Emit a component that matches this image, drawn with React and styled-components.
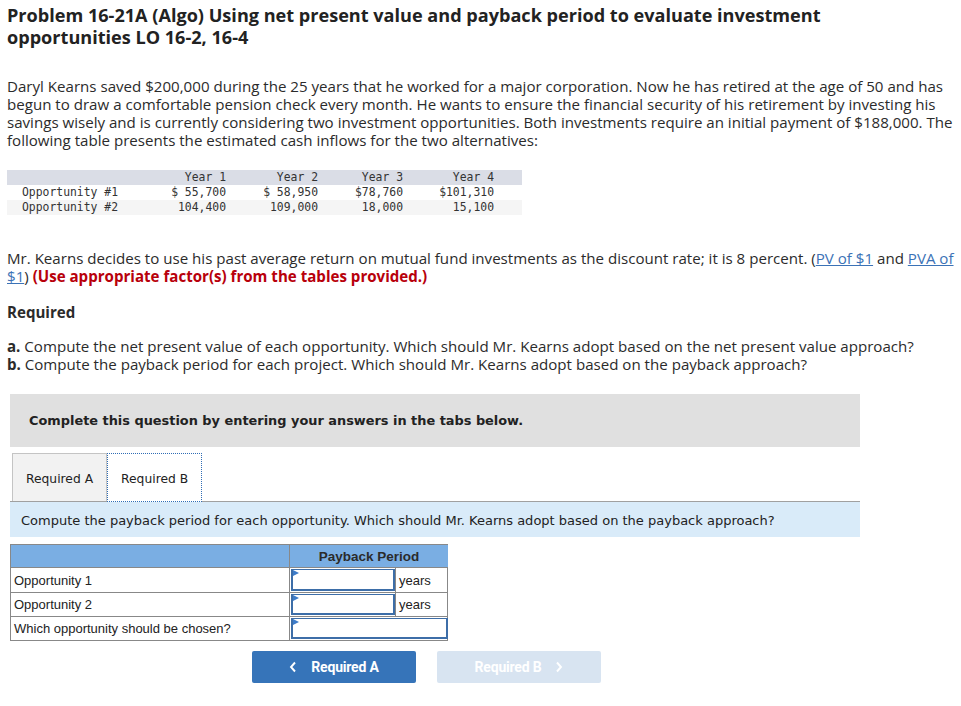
import React from "react";
import styled, { createGlobalStyle } from "styled-components";

const Global = createGlobalStyle`
  html, body { margin: 0; padding: 0; background: #fff; }
  body { font-family: "Open Sans", "Noto Sans", sans-serif; color: #2b2b2b; }
`;

const Page = styled.div`
  width: 961px;
  padding: 4px 0 0 7px;
  box-sizing: border-box;
`;

const Title = styled.h1`
  margin: 0;
  font-family: "Open Sans", sans-serif;
  font-weight: 700;
  font-size: 18.1px;
  line-height: 22px;
  color: #222;
  width: 880px;
`;

const Para = styled.p`
  margin: ${(p) => p.$mt || 0}px 0 0;
  font-family: "Open Sans", sans-serif;
  font-size: 15.1px;
  line-height: 18px;
  width: 948px;
  color: #2b2b2b;
`;

const Strong = styled.b`
  font-weight: 700;
  color: ${(p) => p.$color || "inherit"};
`;

const Link = styled.a`
  color: #3b72b6;
  text-decoration: underline;
`;

const DataTable = styled.div`
  margin-top: 21px;
  width: 515px;
  display: grid;
  grid-template-columns: 143px 76px 92px 85px 91px 28px;
  font-family: "DejaVu Sans Mono", "Liberation Mono", monospace;
  font-size: 11.4px;
  line-height: 15px;
  color: #333;
`;

const DCell = styled.div`
  background: ${(p) => p.$bg};
  text-align: ${(p) => (p.$left ? "left" : "right")};
  padding-left: ${(p) => (p.$left ? "15px" : "0")};
  white-space: pre;
`;

const Gray = styled.div`
  margin: 21px 0 0 3px;
  width: 850px;
  height: 53px;
  background: #e0e0e0;
  display: flex;
  align-items: center;
  padding-left: 19px;
  box-sizing: border-box;
  font-family: "DejaVu Sans", Verdana, sans-serif;
  font-weight: bold;
  font-size: 12.9px;
  color: #222;
`;

const Tabs = styled.div`
  margin: 6px 0 0 3px;
  width: 850px;
  display: flex;
  align-items: flex-end;
  border-bottom: 1px solid #a0a0a0;
  height: 49px;
  padding-left: 2px;
  box-sizing: border-box;
`;

const Tab = styled.div`
  box-sizing: border-box;
  padding: 2px 13px 0;
  display: flex;
  align-items: center;
  font-family: "DejaVu Sans", Verdana, sans-serif;
  font-size: 12.3px;
  color: #222;
  background: ${(p) => (p.$active ? "#fff" : "#f2f2f2")};
  border: ${(p) => (p.$active ? "1px dotted #2f6db5" : "1px solid #c4c4c4")};
  border-bottom: ${(p) => (p.$active ? "1px dotted #2f6db5" : "none")};
  outline: ${(p) => (p.$active ? "1px dotted #2f6db5" : "none")};
  outline-offset: -1px;
  margin-bottom: ${(p) => (p.$active ? "-1px" : "0")};
  height: ${(p) => (p.$active ? "49px" : "48px")};
`;

const Instr = styled.div`
  margin-left: 3px;
  width: 850px;
  height: 35px;
  background: #d9ebf9;
  display: flex;
  align-items: center;
  padding: 2px 0 0 11px;
  box-sizing: border-box;
  font-family: "DejaVu Sans", Verdana, sans-serif;
  font-size: 13px;
  color: #222;
`;

const Answer = styled.div`
  margin: 7px 0 0 3px;
  width: 438px;
  display: grid;
  grid-template-columns: 279px 1fr;
  border: 1px solid #888;
  box-sizing: border-box;
  font-family: "Liberation Sans", Arial, sans-serif;
  font-size: 13px;
  color: #222;
`;

const HeadCell = styled.div`
  height: 23px;
  background: #7aaee3;
  border-right: ${(p) => (p.$first ? "1px solid #888" : "none")};
  border-bottom: 1px solid #888;
  display: flex;
  align-items: center;
  justify-content: center;
  font-weight: bold;
  font-size: 13.5px;
  color: #2b2b2b;
  box-sizing: border-box;
`;

const LabelCell = styled.div`
  height: ${(p) => p.$h}px;
  border-right: 1px solid #888;
  border-bottom: ${(p) => (p.$last ? "none" : "1px solid #888")};
  display: flex;
  align-items: center;
  padding-left: 3px;
  box-sizing: border-box;
`;

const InputCell = styled.div`
  height: ${(p) => p.$h}px;
  border-bottom: ${(p) => (p.$last ? "none" : "1px solid #888")};
  display: flex;
  align-items: stretch;
  box-sizing: border-box;
`;

const InputBox = styled.div`
  position: relative;
  width: ${(p) => (p.$wide ? "157px" : "104px")};
  margin: 1px 0 1px 1px;
  border: 2px solid #3d6ea8;
  border-top-width: 1px;
  box-sizing: border-box;
  background: #fff;
  &::before {
    content: "";
    position: absolute;
    left: 0;
    top: 0;
    border-left: 6px solid #3d7cc9;
    border-top: 3px solid transparent;
    border-bottom: 3px solid transparent;
  }
`;

const Unit = styled.div`
  border-left: 1px solid #888;
  padding-left: 3px;
  display: flex;
  align-items: center;
  flex: 1;
`;

const Nav = styled.div`
  margin: 10px 0 0 245px;
  display: flex;
  gap: 21px;
`;

const NavBtn = styled.div`
  width: 164px;
  height: 32px;
  border-radius: 2px;
  background: ${(p) => (p.$disabled ? "#d8e4f1" : "#3674b9")};
  color: #fff;
  display: flex;
  align-items: center;
  justify-content: center;
  gap: 14px;
  font-family: "Roboto", "Liberation Sans", sans-serif;
  font-weight: bold;
  font-size: 14px;
  letter-spacing: -0.2px;
`;

const Chev = ({ dir }) => (
  <svg width="8" height="12" viewBox="0 0 8 12">
    <path
      d={dir === "left" ? "M6 1.5 L2 6 L6 10.5" : "M2 1.5 L6 6 L2 10.5"}
      fill="none"
      stroke="#fff"
      strokeWidth="1.9"
    />
  </svg>
);

const dataRows = [
  ["", "Year 1", "Year 2", "Year 3", "Year 4"],
  ["Opportunity #1", "$ 55,700", "$ 58,950", "$78,760", "$101,310"],
  ["Opportunity #2", "104,400", "109,000", "18,000", "15,100"],
];
const rowBg = ["#dadde6", "#ffffff", "#f5f5f5"];

export default function App() {
  return (
    <Page>
      <Global />
      <Title>
        Problem 16-21A (Algo) Using net present value and payback period to evaluate investment
        opportunities LO 16-2, 16-4
      </Title>
      <Para $mt={29}>
        Daryl Kearns saved $200,000 during the 25 years that he worked for a major corporation. Now he has
        retired at the age of 50 and has begun to draw a comfortable pension check every month. He wants to
        ensure the financial security of his retirement by investing his savings wisely and is currently
        considering two investment opportunities. Both investments require an initial payment of $188,000. The
        following table presents the estimated cash inflows for the two alternatives:
      </Para>
      <DataTable>
        {dataRows.map((r, i) =>
          [...r, ""].map((c, j) => (
            <DCell key={i + "-" + j} $bg={rowBg[i]} $left={j === 0}>
              {c}
            </DCell>
          ))
        )}
      </DataTable>
      <Para $mt={34}>
        Mr. Kearns decides to use his past average return on mutual fund investments as the discount rate; it is 8
        percent. (<Link>PV of $1</Link> and <Link>PVA of $1</Link>){" "}
        <Strong $color="#b8000b">(Use appropriate factor(s) from the tables provided.)</Strong>
      </Para>
      <Para $mt={18}>
        <Strong>Required</Strong>
      </Para>
      <Para $mt={16}>
        <Strong>a.</Strong> Compute the net present value of each opportunity. Which should Mr. Kearns adopt based
        on the net present value approach?
        <br />
        <Strong>b.</Strong> Compute the payback period for each project. Which should Mr. Kearns adopt based on the
        payback approach?
      </Para>
      <Gray>Complete this question by entering your answers in the tabs below.</Gray>
      <Tabs>
        <Tab>Required A</Tab>
        <Tab $active>Required B</Tab>
      </Tabs>
      <Instr>Compute the payback period for each opportunity. Which should Mr. Kearns adopt based on the payback approach?</Instr>
      <Answer>
        <HeadCell $first />
        <HeadCell>Payback Period</HeadCell>
        <LabelCell $h={25}>Opportunity 1</LabelCell>
        <InputCell $h={25}>
          <InputBox />
          <Unit>years</Unit>
        </InputCell>
        <LabelCell $h={24}>Opportunity 2</LabelCell>
        <InputCell $h={24}>
          <InputBox />
          <Unit>years</Unit>
        </InputCell>
        <LabelCell $h={23} $last>
          Which opportunity should be chosen?
        </LabelCell>
        <InputCell $h={23} $last>
          <InputBox $wide />
        </InputCell>
      </Answer>
      <Nav>
        <NavBtn>
          <Chev dir="left" />
          Required A
        </NavBtn>
        <NavBtn $disabled>
          Required B
          <Chev dir="right" />
        </NavBtn>
      </Nav>
    </Page>
  );
}
